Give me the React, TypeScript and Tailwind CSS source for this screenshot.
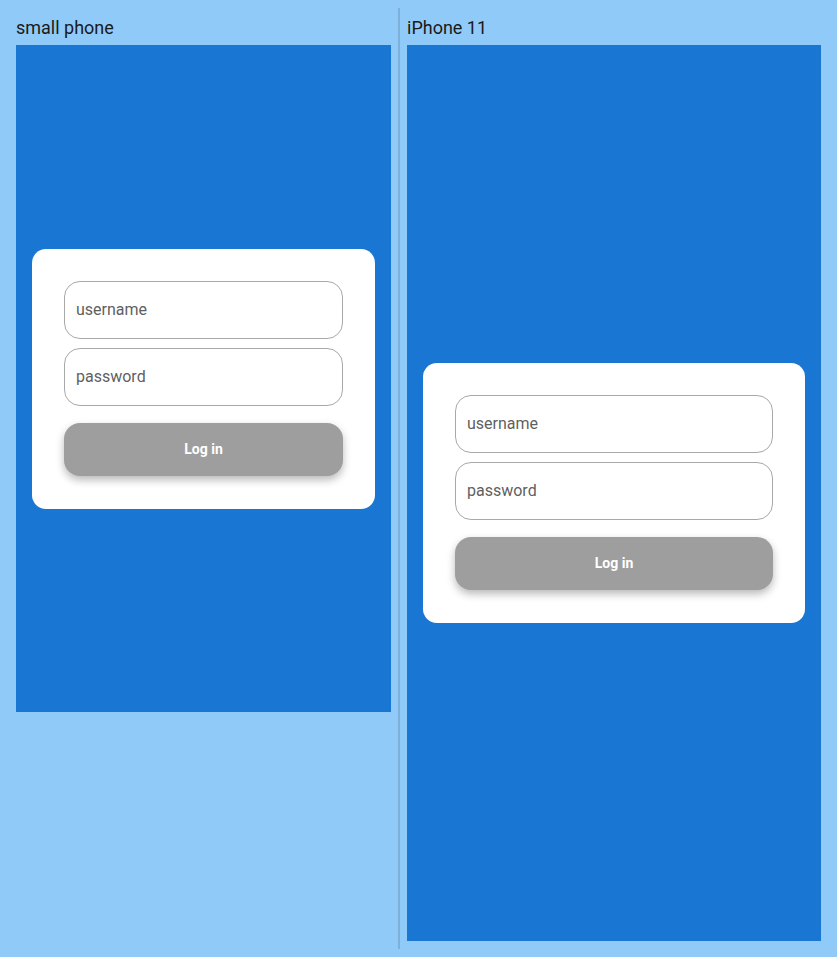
import React from "react";

function LoginCard() {
  return (
    <div className="w-full bg-white rounded-[14px] px-8 pt-[32px] pb-[33px] flex flex-col">
      <div className="h-[58px] rounded-[16px] border border-[#a8a8a8] flex items-center pl-[11px] pr-3 text-[16px] text-[#5f5f5f]">
        username
      </div>
      <div className="h-[58px] mt-[9px] rounded-[16px] border border-[#a8a8a8] flex items-center pl-[11px] pr-3 text-[16px] text-[#5f5f5f]">
        password
      </div>
      <div className="h-[53px] mt-[17px] rounded-[16px] bg-[#9e9e9e] flex items-center justify-center text-white text-[14px] font-bold shadow-[0_4px_8px_rgba(0,0,0,0.28)]">
        Log in
      </div>
    </div>
  );
}

export default function App() {
  return (
    <div
      className="w-[837px] h-[957px] bg-[#90caf9] flex pt-2 pl-4"
      style={{ fontFamily: "Roboto, 'Noto Sans', sans-serif" }}
    >
      <div className="flex flex-col">
        <div className="h-[37px] flex items-center text-[18px] text-[#1a1a1a] pt-[2px]">small phone</div>
        <div className="w-[375px] h-[667px] bg-[#1976d2] flex items-center px-4">
          <LoginCard />
        </div>
      </div>
      <div className="w-[2px] h-[941px] bg-[#7eb0dc] ml-[7px] mr-[7px]" />
      <div className="flex flex-col">
        <div className="h-[37px] flex items-center text-[18px] text-[#1a1a1a] pt-[2px]">iPhone 11</div>
        <div className="w-[414px] h-[896px] bg-[#1976d2] flex items-center px-4">
          <LoginCard />
        </div>
      </div>
    </div>
  );
}
